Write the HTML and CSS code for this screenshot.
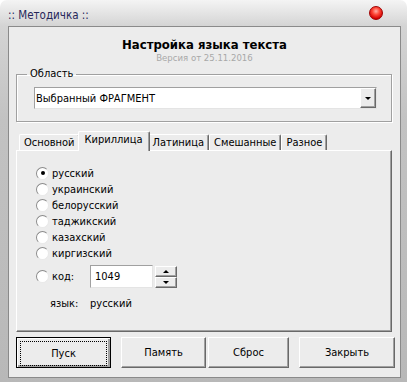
FILE: index.html
```html
<!DOCTYPE html>
<html lang="ru">
<head>
    <meta charset="UTF-8">
    <title>Методичка</title>
    <link rel="stylesheet" href="styles.css">
</head>
<body>

    <div class="window">
        <div class="titlebar">
            <span class="title">:: Методичка ::</span>
            <span class="close"></span>
        </div>

        <div class="client">
            <h1>Настройка языка текста</h1>
            <div class="version">Версия от 25.11.2016</div>

            <!-- Область -->
            <fieldset class="group">
                <legend>Область</legend>
                <div class="combo">
                    <span class="combo-text">Выбранный ФРАГМЕНТ</span>
                    <span class="combo-btn"><i class="arrow down"></i></span>
                </div>
            </fieldset>

            <!-- Вкладки -->
            <div class="tabs">
                <div class="tab">Основной</div>
                <div class="tab active">Кириллица</div>
                <div class="tab">Латиница</div>
                <div class="tab">Смешанные</div>
                <div class="tab">Разное</div>
            </div>

            <div class="panel">
                <div class="radio-list">
                    <label class="radio checked"><span class="circle"></span>русский</label>
                    <label class="radio"><span class="circle"></span>украинский</label>
                    <label class="radio"><span class="circle"></span>белорусский</label>
                    <label class="radio"><span class="circle"></span>таджикский</label>
                    <label class="radio"><span class="circle"></span>казахский</label>
                    <label class="radio"><span class="circle"></span>киргизский</label>
                </div>

                <div class="code-row">
                    <label class="radio"><span class="circle"></span><span class="code-label">код:</span></label>
                    <div class="code-input">1049</div>
                    <div class="spin">
                        <span class="spin-btn"><i class="arrow up"></i></span>
                        <span class="spin-btn"><i class="arrow down"></i></span>
                    </div>
                </div>

                <div class="lang-row">
                    <span class="lang-label">язык:</span>
                    <span>русский</span>
                </div>
            </div>

            <!-- Кнопки -->
            <div class="buttons">
                <button class="btn btn-start default"><span class="focus">Пуск</span></button>
                <button class="btn btn-memory">Память</button>
                <button class="btn btn-reset">Сброс</button>
                <button class="btn btn-close">Закрыть</button>
            </div>
        </div>
    </div>

</body>
</html>
```

FILE: styles.css
```css
body {
    margin: 0;
    padding: 0;
    background-color: #fff;
    font-family: 'DejaVu Sans Condensed', 'DejaVu Sans', sans-serif;
    font-stretch: condensed;
    font-size: 11px;
    color: #000;
}

.window {
    width: 407px;
    height: 382px;
    box-sizing: border-box;
    padding: 0 6px 4px 8px;
    display: flex;
    flex-direction: column;
    border-radius: 7px 7px 0 0;
    background: linear-gradient(to bottom, #f4f4f4 0, #d4d4d4 26px, #c2c2c2 120px, #b8b8b8 100%);
}

.titlebar {
    height: 26px;
    display: flex;
    align-items: center;
    justify-content: space-between;
    padding-right: 18px;
}

.title {
    font-size: 11.5px;
    color: #27275a;
    margin-top: 4px;
}

.close {
    width: 12px;
    height: 12px;
    border-radius: 50%;
    border: 1px solid #a00000;
    background: radial-gradient(circle at 50% 35%, #ffb0a8 0, #ff4a3a 35%, #d40000 75%, #a50000 100%);
}

.client {
    flex: 1;
    border: 1px solid #8a8a8a;
    background-color: #ececec;
    display: flex;
    flex-direction: column;
}

h1 {
    margin: 9px 0 0;
    font-size: 13px;
    line-height: 17px;
    text-align: center;
}

.version {
    margin-top: -1px;
    font-size: 9.5px;
    line-height: 12px;
    color: #a8a8a8;
    text-align: center;
}

.group {
    margin: 3px 8px 0 7px;
    padding: 0 14px 12px 0;
    min-width: 0;
    border: 1px solid #a0a0a0;
    box-shadow: 1px 1px 0 #fff, inset 1px 1px 0 #fff;
}

.group legend {
    margin-left: 10px;
    padding: 0 3px;
    line-height: 14px;
}

.combo {
    margin: 6px 0 0 17px;
    height: 22px;
    box-sizing: border-box;
    display: flex;
    align-items: center;
    justify-content: space-between;
    background-color: #fff;
    border: 1px solid;
    border-color: #a0a0a0 #e4e4e4 #e4e4e4 #a0a0a0;
}

.combo-text {
    padding-left: 1px;
}

.combo-btn {
    width: 16px;
    height: 20px;
    box-sizing: border-box;
    display: flex;
    align-items: center;
    justify-content: center;
    background-color: #ececec;
    border: 1px solid;
    border-color: #fff #696969 #696969 #fff;
    box-shadow: inset -1px -1px 0 #a0a0a0;
}

.arrow {
    width: 0;
    height: 0;
    border-left: 3px solid transparent;
    border-right: 3px solid transparent;
}

.arrow.down {
    border-top: 3px solid #000;
}

.arrow.up {
    border-bottom: 3px solid #000;
}

.tabs {
    margin: 9px 8px 0 7px;
    padding-left: 3px;
    height: 19px;
    display: flex;
    align-items: flex-end;
}

.tab {
    height: 16px;
    box-sizing: border-box;
    padding: 0 4px;
    line-height: 15px;
    border: 1px solid;
    border-bottom: none;
    border-color: #fff #696969 #fff #fff;
    box-shadow: inset -1px 0 0 #a0a0a0;
    border-radius: 2px 2px 0 0;
}

.tab.active {
    position: relative;
    z-index: 1;
    height: 20px;
    margin: 0 -2px -1px;
    padding: 0 6px;
    line-height: 16px;
    background-color: #ececec;
}

.panel {
    margin: 0 8px 0 7px;
    height: 182px;
    box-sizing: border-box;
    padding: 14px 0 0 19px;
    border: 1px solid;
    border-color: #fff #696969 #696969 #fff;
    box-shadow: inset -1px -1px 0 #a0a0a0;
}

.radio {
    height: 16px;
    display: flex;
    align-items: center;
}

.circle {
    width: 13px;
    height: 13px;
    box-sizing: border-box;
    margin-right: 3px;
    border-radius: 50%;
    background-color: #fff;
    border: 1px solid;
    border-color: #8a8a8a #e8e8e8 #e8e8e8 #8a8a8a;
    display: flex;
    align-items: center;
    justify-content: center;
}

.radio.checked .circle::after {
    content: "";
    width: 4px;
    height: 4px;
    border-radius: 50%;
    background-color: #000;
}

.code-row {
    margin-top: 4px;
    display: flex;
    align-items: center;
    height: 23px;
}

.code-label {
    width: 38px;
}

.code-input {
    width: 63px;
    height: 23px;
    box-sizing: border-box;
    padding-left: 4px;
    line-height: 21px;
    background-color: #fff;
    border: 1px solid;
    border-color: #a0a0a0 #e4e4e4 #e4e4e4 #a0a0a0;
}

.spin {
    margin-left: 2px;
    display: flex;
    flex-direction: column;
}

.spin-btn {
    width: 22px;
    height: 11px;
    box-sizing: border-box;
    display: flex;
    align-items: center;
    justify-content: center;
    border: 1px solid;
    border-color: #fff #696969 #696969 #fff;
    box-shadow: inset -1px -1px 0 #a0a0a0;
}

.lang-row {
    margin-top: 9px;
    padding-left: 14px;
    display: flex;
    line-height: 14px;
}

.lang-label {
    width: 40px;
}

.buttons {
    margin: 5px 0 0 7px;
    display: flex;
}

.btn {
    height: 31px;
    box-sizing: border-box;
    margin-right: 10px;
    padding: 0;
    font: inherit;
    color: #000;
    background-color: #ececec;
    border: 1px solid;
    border-color: #fff #696969 #696969 #fff;
    box-shadow: inset -1px -1px 0 #a0a0a0;
}

.btn.default {
    border: 1px solid #000;
    box-shadow: inset 1px 1px 0 #fff, inset -2px -2px 0 #a0a0a0;
    padding: 3px;
}

.focus {
    display: flex;
    align-items: center;
    justify-content: center;
    height: 100%;
    border: 1px dotted #000;
}

.btn-start { width: 95px; }
.btn-memory { width: 85px; margin-right: 2px; }
.btn-reset { width: 81px; }
.btn-close { width: 96px; margin-right: 0; }
```
